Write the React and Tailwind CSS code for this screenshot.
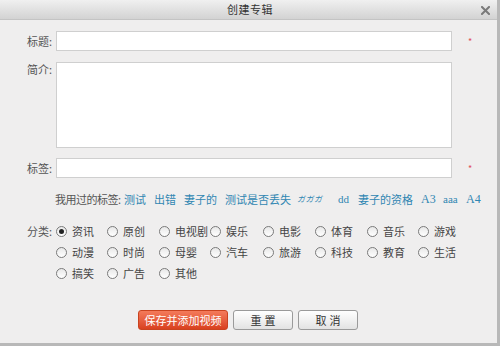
import React from "react";

const F = { fontFamily: '"Noto Sans CJK SC", "Noto Sans", sans-serif' };
const SERIF = { fontFamily: '"Liberation Serif", serif' };

function Radio({ checked, label }) {
  return (
    <div className="flex items-center h-[21px]">
      <span className="w-[11px] h-[11px] rounded-full border border-[#7a7a7a] bg-gradient-to-b from-[#e8e8e8] to-white flex items-center justify-center shrink-0">
        {checked && <span className="w-[5px] h-[5px] rounded-full bg-[#222]" />}
      </span>
      <span className="ml-[5px] text-[11px] text-[#444] whitespace-nowrap leading-none">{label}</span>
    </div>
  );
}

const cats = [
  "资讯", "原创", "电视剧", "娱乐", "电影", "体育", "音乐", "游戏",
  "动漫", "时尚", "母婴", "汽车", "旅游", "科技", "教育", "生活",
  "搞笑", "广告", "其他",
];

export default function App() {
  return (
    <div className="w-[500px] h-[346px] bg-[#b8b8b8] overflow-hidden" style={F}>
      <div className="w-[497px] h-[343px] bg-[#efeeee] flex flex-col">
        {/* title bar */}
        <div className="h-[20px] shrink-0 relative flex items-center justify-center bg-gradient-to-b from-[#f0f0f0] to-[#d3d3d3] border-b border-[#c4c4c4]">
          <span className="text-[11px] text-[#333] leading-none tracking-[0.5px] pl-[3px]">创建专辑</span>
          <svg className="absolute left-[481px] top-[6px]" width="9" height="9" viewBox="0 0 9 9">
            <path d="M1 1L8 8M8 1L1 8" stroke="#7a7a7a" strokeWidth="2" strokeLinecap="square" />
          </svg>
        </div>

        {/* title row */}
        <div className="flex items-center mt-[11px] h-[20px]">
          <div className="w-[56px] pr-[4px] text-right text-[11px] text-[#555] leading-none">标题:</div>
          <div className="w-[396px] h-[20px] bg-white border border-[#cfcfcf]" />
          <div className="ml-[16px] text-[9px] text-[#e0505a] leading-none">*</div>
        </div>

        {/* intro */}
        <div className="flex items-start mt-[11px]">
          <div className="w-[56px] pr-[4px] pt-[2px] text-right text-[11px] text-[#555] leading-none">简介:</div>
          <div className="w-[396px] h-[86px] bg-white border border-[#cfcfcf]" />
        </div>

        {/* tags */}
        <div className="flex items-center mt-[10px] h-[20px]">
          <div className="w-[56px] pr-[4px] text-right text-[11px] text-[#555] leading-none">标签:</div>
          <div className="w-[396px] h-[20px] bg-white border border-[#cfcfcf]" />
          <div className="ml-[16px] text-[9px] text-[#e0505a] leading-none">*</div>
        </div>

        {/* used tags */}
        <div className="flex items-center mt-[13px] h-[16px] pl-[55px] text-[11px] leading-none whitespace-nowrap">
          <span className="w-[69px] shrink-0 text-[#555] tracking-[-0.5px]">我用过的标签:</span>
          <div className="flex items-center text-[#2f86b2]">
            <span className="mr-[8px]">测试</span>
            <span className="mr-[8px]">出错</span>
            <span className="mr-[8px]">妻子的</span>
            <span className="mr-[6px]">测试是否丢失</span>
            <span className="inline-block w-[26px] mr-[15px] italic text-[8px] tracking-[0.5px]" style={{ fontFamily: '"Noto Sans CJK JP", sans-serif' }}>ガガガ</span>
            <span className="inline-block w-[11px] mr-[9px]" style={SERIF}>dd</span>
            <span className="mr-[8px]">妻子的资格</span>
            <span className="inline-block w-[15px] mr-[7px] text-[12px]" style={SERIF}>A3</span>
            <span className="inline-block w-[15px] mr-[8px]" style={SERIF}>aaa</span>
            <span className="text-[12px]" style={SERIF}>A4</span>
          </div>
        </div>

        {/* categories */}
        <div className="flex items-start mt-[14px]">
          <div className="w-[56px] pr-[4px] h-[21px] flex items-center justify-end text-[11px] text-[#555] leading-none">分类:</div>
          <div className="grid grid-cols-[51px_52px_51px_53px_52px_52px_51px_52px]">
            {cats.map((c, i) => (
              <Radio key={c} label={c} checked={i === 0} />
            ))}
          </div>
        </div>

        {/* buttons */}
        <div className="flex gap-[5px] mt-[26px] pl-[138px]">
          <div className="w-[90px] h-[20px] rounded-[3px] border border-[#c9431f] bg-gradient-to-b from-[#f47a5a] to-[#d9401e] flex items-center justify-center text-[11px] text-white leading-none">
            保存并添加视频
          </div>
          <div className="w-[60px] h-[20px] rounded-[3px] border border-[#9a9a9a] bg-gradient-to-b from-white to-[#e3e3e3] flex items-center justify-center text-[11px] text-[#333] leading-none tracking-[3px] pl-[3px]">
            重置
          </div>
          <div className="w-[60px] h-[20px] rounded-[3px] border border-[#9a9a9a] bg-gradient-to-b from-white to-[#e3e3e3] flex items-center justify-center text-[11px] text-[#333] leading-none tracking-[3px] pl-[3px]">
            取消
          </div>
        </div>
      </div>
    </div>
  );
}
